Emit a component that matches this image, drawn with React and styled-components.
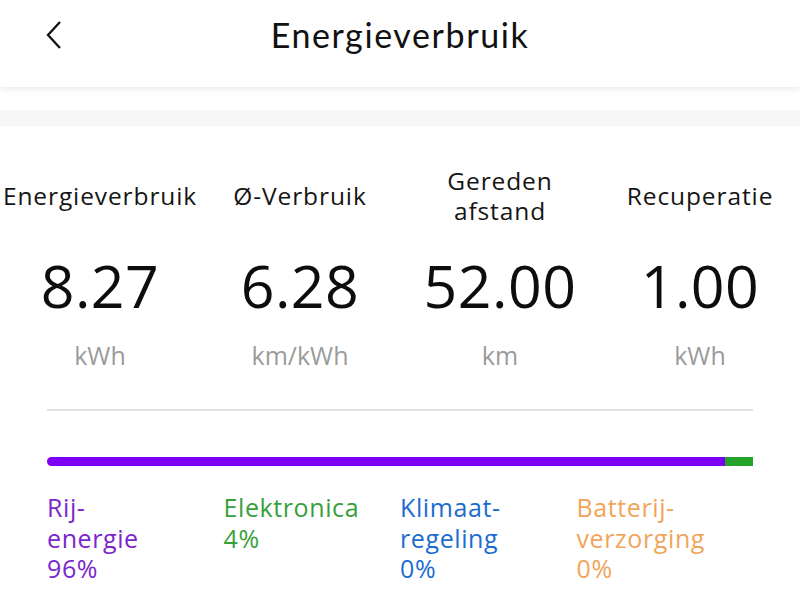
import React from "react";
import styled, { createGlobalStyle } from "styled-components";

const Global = createGlobalStyle`
  html, body { margin: 0; padding: 0; background: #ffffff; }
  body { font-family: "Open Sans", "Noto Sans", sans-serif; color: #111; }
  * { box-sizing: border-box; }
`;

const Page = styled.div`
  width: 800px;
  height: 610px;
  overflow: hidden;
  background: #fff;
  display: flex;
  flex-direction: column;
`;

const Header = styled.header`
  position: relative;
  z-index: 1;
  height: 87px;
  padding-bottom: 18px;
  background: #fff;
  box-shadow: 0 2px 7px rgba(0, 0, 0, 0.09);
`;

const HeaderRow = styled.div`
  height: 69px;
  display: grid;
  grid-template-columns: 120px 1fr 120px;
  align-items: center;
`;

const BackButton = styled.button`
  border: 0;
  background: none;
  padding: 0 0 0 45px;
  height: 100%;
  display: flex;
  align-items: center;
  cursor: pointer;
`;

const Title = styled.h1`
  margin: 0;
  text-align: center;
  font-family: "Lato", sans-serif;
  font-weight: 400;
  font-size: 34px;
  letter-spacing: 1.6px;
  line-height: 69px;
  color: #111;
`;

const Spacer = styled.div`
  height: 23px;
  background: #fff;
`;

const Band = styled.div`
  height: 16px;
  background: #f7f7f7;
`;

const Content = styled.main`
  padding: 40px 47px 0;
`;

const StatsGrid = styled.div`
  margin: 0 -47px;
  display: grid;
  grid-template-columns: repeat(4, 1fr);
`;

const Stat = styled.div`
  display: flex;
  flex-direction: column;
  align-items: center;
`;

const Label = styled.div`
  height: 60px;
  display: flex;
  align-items: center;
  justify-content: center;
  text-align: center;
  font-size: 24.5px;
  letter-spacing: 0.9px;
  line-height: 30px;
  color: #151515;
  white-space: pre-line;
`;

const Value = styled.div`
  margin-top: 30px;
  font-size: 59px;
  line-height: 58px;
  letter-spacing: 0.5px;
  color: #0d0d0d;
`;

const Unit = styled.div`
  margin-top: 26px;
  font-size: 25px;
  line-height: 30px;
  color: #9b9b9b;
`;

const Divider = styled.hr`
  margin: 39px 0 0;
  border: 0;
  height: 2px;
  background: #e2e2e2;
`;

const Bar = styled.div`
  margin-top: 46px;
  height: 9px;
  display: flex;
  border-radius: 5px 0 0 5px;
  overflow: hidden;
`;

const Segment = styled.div`
  height: 100%;
  background: ${(p) => p.$color};
`;

const Legend = styled.div`
  margin-top: 26px;
  display: grid;
  grid-template-columns: repeat(4, 1fr);
`;

const LegendItem = styled.div`
  font-size: 25px;
  letter-spacing: 0.6px;
  line-height: 30.5px;
  color: ${(p) => p.$color};
  white-space: pre-line;
`;

const stats = [
  { label: "Energieverbruik", value: "8.27", unit: "kWh" },
  { label: "Ø-Verbruik", value: "6.28", unit: "km/kWh" },
  { label: "Gereden\nafstand", value: "52.00", unit: "km" },
  { label: "Recuperatie", value: "1.00", unit: "kWh" },
];

const segments = [
  { pct: 96.0, color: "#7c00f5" },
  { pct: 4.0, color: "#25a22a" },
];

const legend = [
  { text: "Rij-\nenergie\n96%", color: "#7a26cc" },
  { text: "Elektronica\n4%", color: "#38a03a" },
  { text: "Klimaat-\nregeling\n0%", color: "#1c6cd0" },
  { text: "Batterij-\nverzorging\n0%", color: "#f0a55a" },
];

export default function App() {
  return (
    <Page>
      <Global />
      <Header>
        <HeaderRow>
          <BackButton aria-label="Terug">
            <svg width="18" height="30" viewBox="0 0 18 30" fill="none">
              <polyline
                points="15,2 3,15 15,28"
                stroke="#111"
                strokeWidth="2.3"
                strokeLinecap="butt"
                strokeLinejoin="miter"
              />
            </svg>
          </BackButton>
          <Title>Energieverbruik</Title>
          <div />
        </HeaderRow>
      </Header>
      <Spacer />
      <Band />
      <Content>
        <StatsGrid>
          {stats.map((s) => (
            <Stat key={s.value + s.unit}>
              <Label>{s.label}</Label>
              <Value>{s.value}</Value>
              <Unit>{s.unit}</Unit>
            </Stat>
          ))}
        </StatsGrid>
        <Divider />
        <Bar>
          {segments.map((s) => (
            <Segment key={s.color} $color={s.color} style={{ width: `${s.pct}%` }} />
          ))}
        </Bar>
        <Legend>
          {legend.map((l) => (
            <LegendItem key={l.color} $color={l.color}>
              {l.text}
            </LegendItem>
          ))}
        </Legend>
      </Content>
    </Page>
  );
}
